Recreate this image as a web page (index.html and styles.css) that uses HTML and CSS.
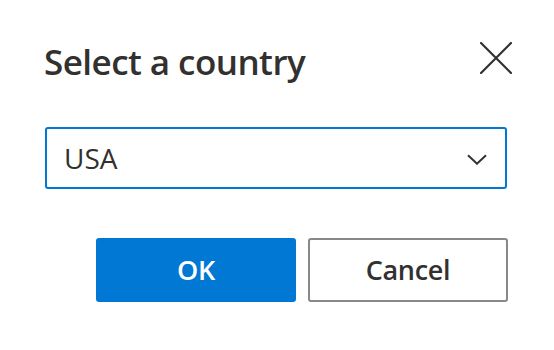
FILE: index.html
```html
<!DOCTYPE html>
<html lang="en">
<head>
<meta charset="utf-8">
<title>Select a country</title>
<link rel="stylesheet" href="styles.css">
</head>
<body>
<div class="dialog">
  <div class="header">
    <h1 class="title">Select a country</h1>
    <button class="close" aria-label="Close">
      <svg width="32" height="32" viewBox="0 0 32 32"><path d="M1 1 L31 31 M31 1 L1 31" stroke="#323130" stroke-width="2.2" fill="none" stroke-linecap="square"/></svg>
    </button>
  </div>
  <div class="select">
    <span class="value">USA</span>
    <svg class="chev" width="20" height="11" viewBox="0 0 20 11"><path d="M1 1.2 L10 9.7 L19 1.2" stroke="#323130" stroke-width="2" fill="none"/></svg>
  </div>
  <div class="actions">
    <button class="btn primary">OK</button>
    <button class="btn secondary">Cancel</button>
  </div>
</div>
</body>
</html>
```
FILE: styles.css
```css
html, body {
  margin: 0;
  padding: 0;
  background: #ffffff;
}
body {
  font-family: "Open Sans", "Noto Sans", sans-serif;
  color: #323130;
}
.dialog {
  width: 554px;
  height: 350px;
  box-sizing: border-box;
  padding: 38px 47px 0 45px;
}
.header {
  display: flex;
  justify-content: space-between;
  align-items: flex-start;
  height: 48px;
}
.title {
  margin: 0;
  font-size: 35px;
  line-height: 48px;
  font-weight: 600;
  letter-spacing: -0.55px;
  margin-left: -1px;
}
.close {
  border: 0;
  background: none;
  padding: 0;
  margin: 4px -5px 0 0;
  width: 32px;
  height: 32px;
  display: block;
}
.close svg { display: block; }
.select {
  margin-top: 41px;
  height: 62px;
  box-sizing: border-box;
  border: 2px solid #0078d4;
  border-radius: 3px;
  display: flex;
  align-items: center;
  justify-content: space-between;
  padding: 0 18px 0 17px;
}
.value {
  font-size: 28px;
  line-height: 58px;
  font-weight: 400;
}
.chev { display: block; margin-top: 2px; }
.actions {
  margin-top: 49px;
  display: flex;
  justify-content: flex-end;
  gap: 12px;
  margin-right: -1px;
}
.btn {
  width: 200px;
  height: 64px;
  box-sizing: border-box;
  border-radius: 3px;
  font-family: "Open Sans", "Noto Sans", sans-serif;
  font-size: 27px;
  line-height: 60px;
  font-weight: 600;
  letter-spacing: -0.3px;
  padding: 0;
}
.primary {
  background: #0078d4;
  border: 2px solid #0078d4;
  color: #ffffff;
}
.secondary {
  background: #ffffff;
  border: 2px solid #8a8886;
  color: #323130;
}
```
